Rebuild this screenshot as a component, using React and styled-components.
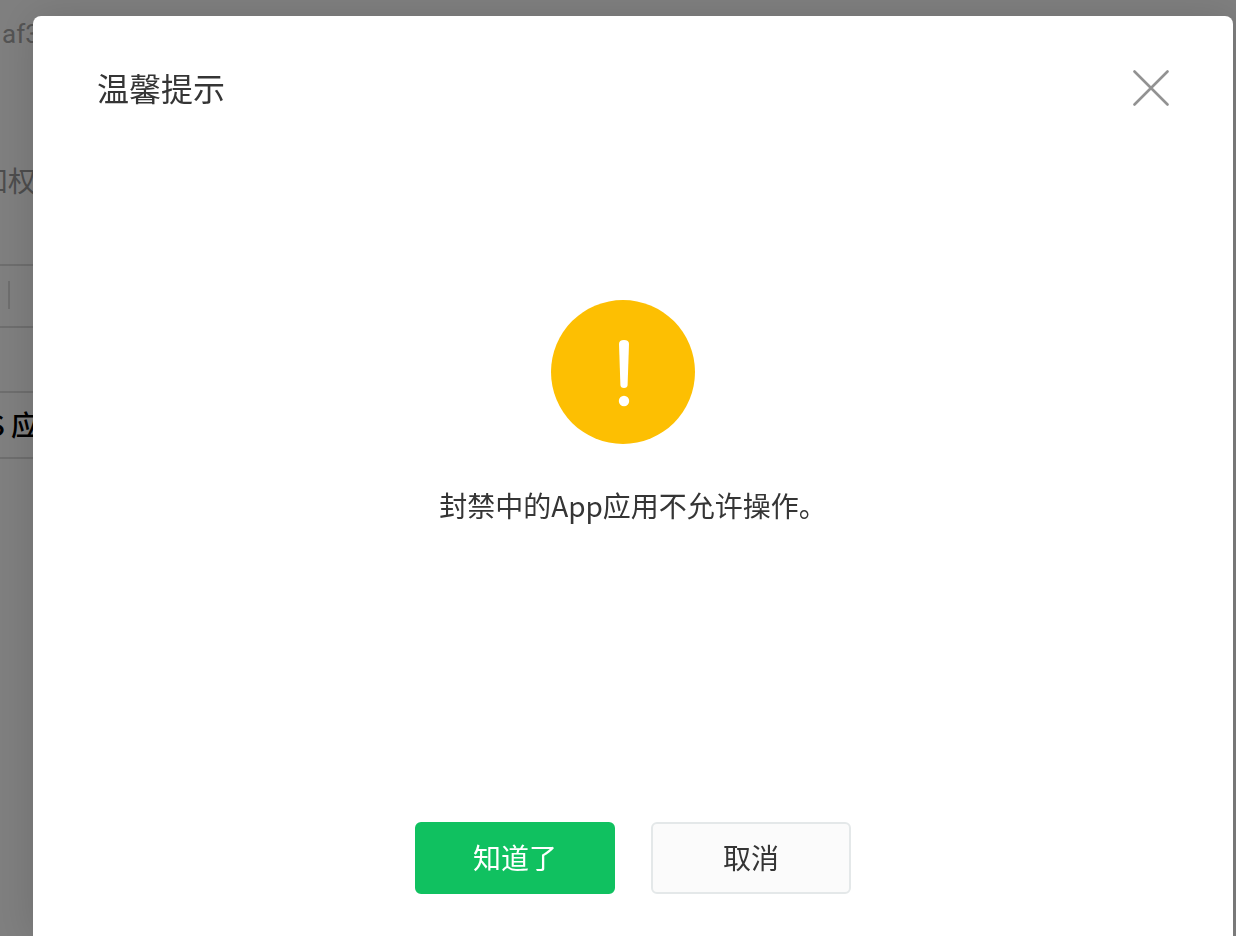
import React, { useState } from "react";
import styled, { createGlobalStyle } from "styled-components";

const GlobalStyle = createGlobalStyle`
  * {
    box-sizing: border-box;
  }
  body {
    margin: 0;
    color: #353535;
    background-color: #fff;
    font-family: "Noto Sans CJK SC", "Noto Sans", sans-serif;
    font-size: 28px;
    line-height: 40px;
  }
`;

const Page = styled.main`
  min-height: 100vh;
  padding-right: 40px;
  overflow: hidden;
`;

const AppId = styled.div`
  padding: 14px 2px 0;
  color: #a8a8a8;
  font-family: Roboto, "Liberation Sans", sans-serif;
  font-size: 26px;
`;

const Clipped = styled.div`
  display: flex;
  justify-content: flex-end;
  width: ${props => props.$width};
  white-space: nowrap;
  overflow: hidden;
`;

const Hint = styled(Clipped)`
  margin: 106px 0 64px;
  color: #9a9a9a;
`;

const Row = styled.div`
  display: flex;
  align-items: center;
  height: ${props => props.$height};
  padding-bottom: 2px;
  border-top: 2px solid #dcdcdc;
  color: #000;
  font-weight: 500;
  &:last-child {
    border-bottom: 2px solid #dcdcdc;
  }
`;

const Divider = styled.span`
  width: 2px;
  height: 28px;
  margin-left: 8px;
  background-color: #dcdcdc;
`;

const Mask = styled.div`
  position: fixed;
  inset: 0;
  padding: 16px 3px 0 33px;
  background-color: rgba(0, 0, 0, 0.5);
  overflow: hidden;
`;

const DialogBox = styled.section`
  display: flex;
  flex-direction: column;
  height: 100%;
  border-radius: 8px 8px 0 0;
  background-color: #fff;
  box-shadow: 0 2px 40px rgba(0, 0, 0, 0.14);
`;

const DialogHeader = styled.header`
  display: flex;
  align-items: center;
  justify-content: space-between;
  height: 144px;
  padding: 0 64px;
`;

const Title = styled.h2`
  margin: 0;
  padding-bottom: 2px;
  font-size: 32px;
  font-weight: 400;
`;

const CloseButton = styled.button`
  display: flex;
  padding: 0;
  border: 0;
  background: none;
  &:hover {
    cursor: pointer;
  }
`;

const DialogBody = styled.div`
  display: flex;
  flex: 1;
  flex-direction: column;
  align-items: center;
  padding-top: 140px;
`;

const WarnIcon = styled.svg`
  margin-right: 20px;
`;

const Message = styled.p`
  margin: 41px 0 0;
`;

const DialogFooter = styled.footer`
  display: flex;
  justify-content: center;
  gap: 36px;
  padding-bottom: 42px;
`;

const Button = styled.button`
  width: 200px;
  height: 72px;
  padding: 0 0 2px;
  border: 2px solid ${props => (props.$primary ? "#10c160" : "#e4e8e9")};
  border-radius: 6px;
  color: ${props => (props.$primary ? "#fff" : "#353535")};
  background-color: ${props => (props.$primary ? "#10c160" : "#fbfbfb")};
  font: inherit;
  &:hover {
    cursor: pointer;
  }
`;

const Dialog = ({ title, message, onClose }) => (
  <Mask>
    <DialogBox role="dialog" aria-modal="true" aria-labelledby="dialog-title">
      <DialogHeader>
        <Title id="dialog-title">{title}</Title>
        <CloseButton aria-label="关闭" onClick={onClose}>
          <svg width="36" height="36" viewBox="0 0 36 36" fill="none">
            <path
              d="M1.5 1.5l33 33M34.5 1.5l-33 33"
              stroke="#929292"
              strokeWidth="2.6"
              strokeLinecap="round"
            />
          </svg>
        </CloseButton>
      </DialogHeader>
      <DialogBody>
        <WarnIcon width="144" height="144" viewBox="0 0 144 144">
          <circle cx="72" cy="72" r="72" fill="#fdbf02" />
          <path
            d="M68 44Q68 40 73 40Q78 40 78 44L76.600 85Q76.400 88 73 88Q69.600 88 69.400 85Z"
            fill="#fff"
          />
          <circle cx="73" cy="101" r="5.2" fill="#fff" />
        </WarnIcon>
        <Message>{message}</Message>
      </DialogBody>
      <DialogFooter>
        <Button $primary onClick={onClose}>
          知道了
        </Button>
        <Button onClick={onClose}>取消</Button>
      </DialogFooter>
    </DialogBox>
  </Mask>
);

const App = () => {
  const [open, setOpen] = useState(true);

  return (
    <>
      <GlobalStyle />
      <Page>
        <AppId>af3</AppId>
        <Hint $width="36px">和权</Hint>
        <div>
          <Row $height="62px">
            <Divider />
          </Row>
          <Row $height="65px" />
          <Row $height="68px">
            <Clipped $width="39px">S 应</Clipped>
          </Row>
        </div>
      </Page>
      {open && (
        <Dialog
          title="温馨提示"
          message="封禁中的App应用不允许操作。"
          onClose={() => setOpen(false)}
        />
      )}
    </>
  );
};

export default App;
